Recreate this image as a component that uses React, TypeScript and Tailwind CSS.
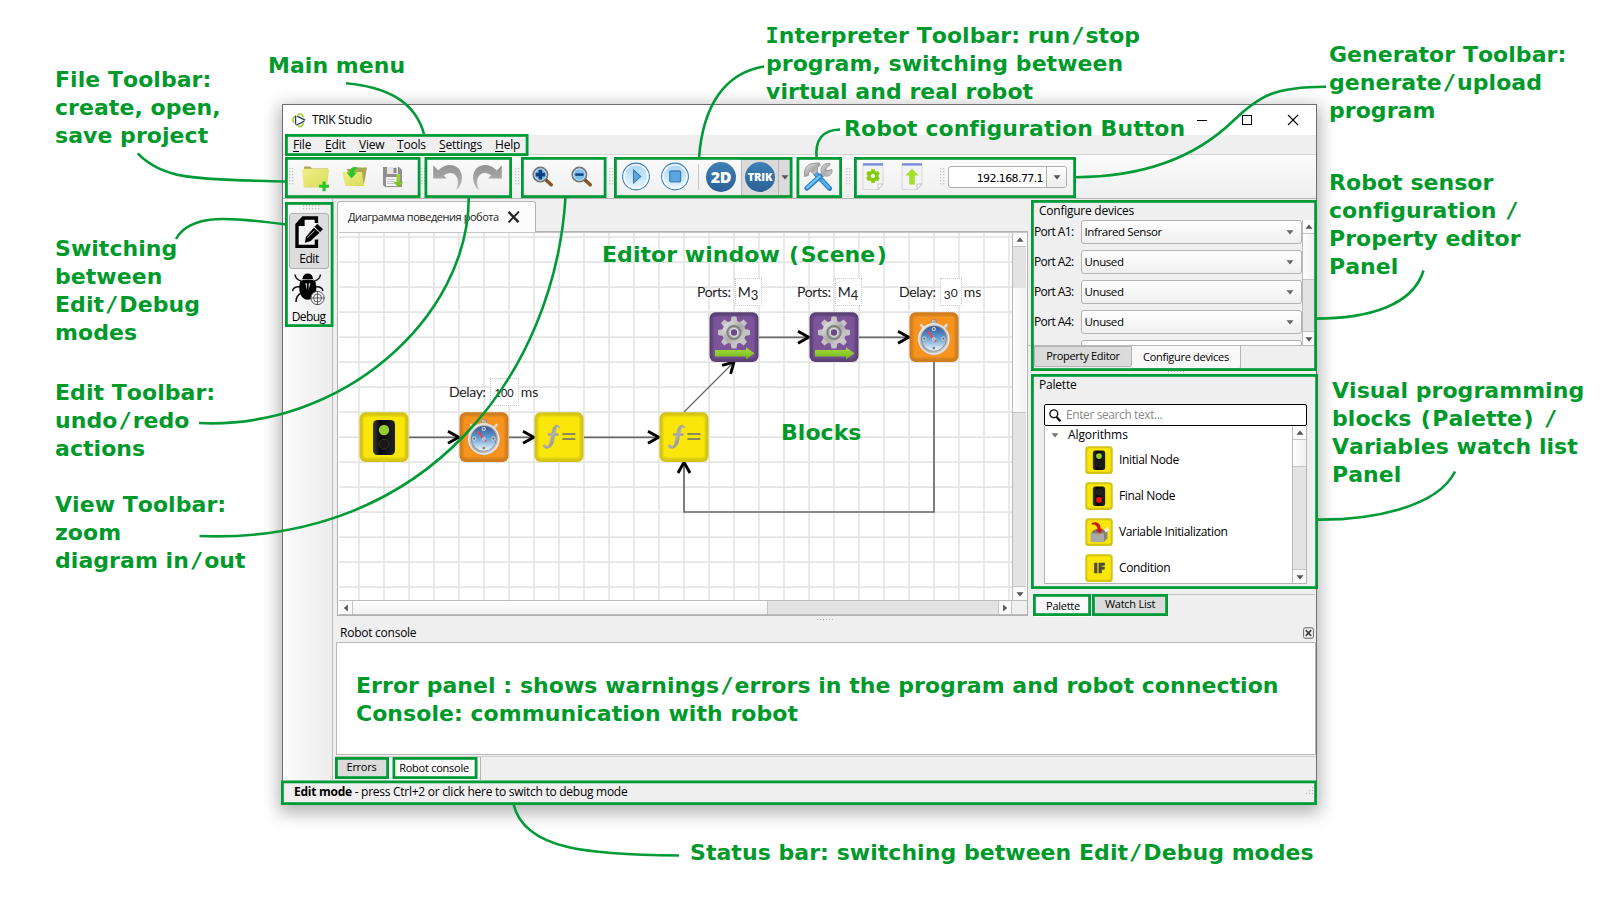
import React from "react";

const UI = "font-['Open_Sans','Noto_Sans',sans-serif]";

/* ---------- small shared pieces ---------- */

function Handle({ className = "" }: { className?: string }) {
  return (
    <svg className={`shrink-0 ${className}`} width="5" height="18" viewBox="0 0 5 18">
      {[0, 3, 6, 9, 12, 15].map((y) => (
        <g key={y} fill="#c4c4c4">
          <rect x="0" y={y} width="1.3" height="1.3" />
          <rect x="3" y={y} width="1.3" height="1.3" />
        </g>
      ))}
    </svg>
  );
}

function Arrow({ dir = "down", color = "#555" }: { dir?: "up" | "down" | "left" | "right"; color?: string }) {
  const d = {
    down: "M0.5 2.2H7.5L4 6.4Z",
    up: "M0.5 5.8H7.5L4 1.6Z",
    left: "M5.9 0.5V7.5L1.8 4Z",
    right: "M2.1 0.5V7.5L6.2 4Z",
  }[dir];
  return (
    <svg width="8" height="8" viewBox="0 0 8 8" className="shrink-0">
      <path d={d} fill={color} />
    </svg>
  );
}

function VScroll({ before, thumb, width }: { before: string; thumb: string; width: string }) {
  return (
    <div className={`flex shrink-0 flex-col border-l border-[#b9b9b9] bg-[#e3e3e3] ${width}`}>
      <div className="flex h-[14px] shrink-0 items-center justify-center border-b border-[#c4c4c4] bg-[#fafafa]">
        <Arrow dir="up" />
      </div>
      <div className={`shrink-0 ${before}`} />
      <div className={`shrink-0 border-b border-[#c4c4c4] bg-gradient-to-r from-[#fcfcfc] to-[#f1f1f1] ${thumb}`} />
      <div className="grow" />
      <div className="flex h-[14px] shrink-0 items-center justify-center border-t border-[#c4c4c4] bg-[#fafafa]">
        <Arrow dir="down" />
      </div>
    </div>
  );
}

/* ---------- gradients used by several drawings ---------- */

function Defs() {
  return (
    <svg width="0" height="0" className="absolute">
      <defs>
        <linearGradient id="steel" x1="0" y1="0" x2="1" y2="1">
          <stop offset="0" stopColor="#f2f2f2" />
          <stop offset="0.5" stopColor="#a9a9a9" />
          <stop offset="1" stopColor="#dcdcdc" />
        </linearGradient>
        <linearGradient id="dial" x1="0" y1="0" x2="0" y2="1">
          <stop offset="0" stopColor="#2f55a0" />
          <stop offset="0.45" stopColor="#5f9ad0" />
          <stop offset="1" stopColor="#f4fbff" />
        </linearGradient>
        <linearGradient id="folder" x1="0" y1="0" x2="1" y2="1">
          <stop offset="0" stopColor="#efef8c" />
          <stop offset="1" stopColor="#dada55" />
        </linearGradient>
        <linearGradient id="green" x1="0" y1="0" x2="0" y2="1">
          <stop offset="0" stopColor="#a5dc3c" />
          <stop offset="1" stopColor="#74b81c" />
        </linearGradient>
        <linearGradient id="ice" x1="0" y1="0" x2="0" y2="1">
          <stop offset="0" stopColor="#a8d4f5" />
          <stop offset="1" stopColor="#e6f8ff" />
        </linearGradient>
        <linearGradient id="grayv" x1="0" y1="0" x2="0" y2="1">
          <stop offset="0" stopColor="#929292" />
          <stop offset="1" stopColor="#b9b9b9" />
        </linearGradient>
        <linearGradient id="fn" x1="0" y1="0" x2="1" y2="1">
          <stop offset="0" stopColor="#6f6f6f" />
          <stop offset="0.5" stopColor="#b0b0b0" />
          <stop offset="1" stopColor="#6f6f6f" />
        </linearGradient>
        <linearGradient id="dark" x1="0" y1="0" x2="1" y2="0">
          <stop offset="0" stopColor="#3a3a3a" />
          <stop offset="0.35" stopColor="#050505" />
          <stop offset="1" stopColor="#222" />
        </linearGradient>
        <filter id="soft" x="-10%" y="-10%" width="120%" height="120%">
          <feGaussianBlur stdDeviation="1.3" />
        </filter>
      </defs>
    </svg>
  );
}

/* ---------- toolbar icons ---------- */

const NewIcon = () => (
  <svg width="28" height="28" viewBox="0 0 28 28" className="mt-[6px] ml-2 shrink-0">
    <path d="M2 3V1.6Q2 .6 3 .6H8L10 2.4H26V6H2Z" fill="#a9a552" />
    <path d="M0 3.6Q0 2.8 .8 2.8H26.2Q27.2 2.8 27 4L25 20.5Q24.8 21.4 24 21.4H2.6Q1.8 21.4 1.7 20.5Z" fill="url(#folder)" />
    <path d="M20.5 15.5h3.2v3.2h3.3v3.1h-3.3v3.4h-3.2v-3.4h-3.5v-3.1h3.5z" fill="#2bc52b" />
  </svg>
);

const OpenIcon = () => (
  <svg width="26" height="22" viewBox="0 0 26 22" className="ml-3 shrink-0">
    <path d="M5 3L14 3 15.5 1.6H25L22 18H8Z" fill="#a9a552" />
    <path d="M0 6H20L22 20H3.5Z" fill="url(#folder)" />
    <path d="M17 2.2C12 -.5 7.5 2 7.6 6.4L4.5 6.4 9.4 12.5 15 6.6 12 6.6C12 3.6 14 2.4 17 2.2Z" fill="#2bc52b" />
  </svg>
);

const SaveIcon = () => (
  <svg width="22" height="22" viewBox="0 0 22 22" className="ml-[14px] shrink-0">
    <path d="M1 1H17L20 4V21H3L1 19Z" fill="#8f8f8f" />
    <rect x="5" y="1" width="11" height="7" fill="#e4e4e4" />
    <rect x="11.5" y="2" width="3" height="5" fill="#8a8a8a" />
    <rect x="4" y="11" width="13" height="9" fill="#f4f4f4" />
    <path d="M5 13.5H13M5 15.5H13M5 17.5H13" stroke="#c9c9c9" strokeWidth="1" />
    <path d="M14.5 8H18V16H21.2L16.3 21.6 11.5 16H14.5Z" fill="url(#green)" />
  </svg>
);

const UndoShape = () => (
  <path d="M.2 2.2 5.2 7.4C14-1.5 26.5 1 28.6 11.5 29.8 18 27.4 23.6 23 27.2 25.6 21 25.6 15.6 22.4 12.2 19.2 8.8 14.4 9.4 10.8 12.6L13.8 15.6H.2Z" fill="url(#grayv)" />
);

function Magnifier({ plus, className }: { plus?: boolean; className: string }) {
  return (
    <svg width="22" height="22" viewBox="0 0 22 22" className={`shrink-0 ${className}`}>
      <path d="M14 14 19.2 18.8" stroke="#8b5527" strokeWidth="3.6" strokeLinecap="round" />
      <path d="M12.5 12.5 14.8 14.6" stroke="#444" strokeWidth="2.6" />
      <circle cx="8.4" cy="8.6" r="7" fill="#7dc0ee" stroke="#777" strokeWidth="2" />
      <circle cx="8.4" cy="8.6" r="5.8" fill="none" stroke="#d5ecfa" strokeWidth="0.9" />
      <path d={plus ? "M3.6 8.6H13.2M8.4 3.8V13.4" : "M4.2 8.6H12.6"} stroke="#0b3f80" strokeWidth={plus ? 3.6 : 2.4} />
    </svg>
  );
}

const PlayIcon = () => (
  <svg width="28" height="29" viewBox="0 0 28 29" className="ml-2 shrink-0">
    <circle cx="14" cy="14.5" r="13.4" fill="url(#ice)" stroke="#4482ba" strokeWidth="1.1" />
    <circle cx="14" cy="14.5" r="11.8" fill="none" stroke="#fff" strokeOpacity="0.8" strokeWidth="1.6" />
    <path d="M11.5 8 18.8 14.6 11.5 21Z" fill="#5ea6de" stroke="#3f7db5" strokeWidth="1.1" />
  </svg>
);

const StopIcon = () => (
  <svg width="28" height="29" viewBox="0 0 28 29" className="ml-[11px] shrink-0">
    <circle cx="14" cy="14.5" r="13.4" fill="url(#ice)" stroke="#4482ba" strokeWidth="1.1" />
    <circle cx="14" cy="14.5" r="11.8" fill="none" stroke="#fff" strokeOpacity="0.8" strokeWidth="1.6" />
    <rect x="8.8" y="9" width="10.8" height="10.8" rx="1" fill="#5ea6de" stroke="#3f7db5" strokeWidth="1.3" />
  </svg>
);

function BlueBadge({ text, size }: { text: string; size: string }) {
  return (
    <div
      className={`flex size-[30px] shrink-0 items-center justify-center rounded-full bg-gradient-to-b from-[#4080b6] to-[#2a6196] font-['Open_Sans',sans-serif] font-extrabold text-white ${size}`}
    >
      {text}
    </div>
  );
}

const ToolsIcon = () => (
  <svg width="29" height="29" viewBox="0 0 29 29" className="ml-[13px] shrink-0">
    <path d="M12 12 25.5 26.4" stroke="#2f7fc4" strokeWidth="5" strokeLinecap="round" />
    <path d="M12 12 25 25.8" stroke="#52b2ee" strokeWidth="2.6" strokeLinecap="round" />
    <path d="M.6 14.5V8.5C2 3.5 6 .8 15 1L16.4 3.2 13.4 5.4 13.8 9.6 10.6 12.6 6.4 9.2 4.6 10.4 4.4 13.4Z" fill="url(#steel)" stroke="#8e8e8e" strokeWidth="0.8" />
    <path d="M26 2.8 22 6.3 22.4 8.8 28 7.6C28.6 12.4 24.6 15.2 20.4 13.8L17.4 16.2 14.4 13 17.4 10.4C15.8 5.8 19 .4 26 1.6Z" fill="url(#steel)" stroke="#8e8e8e" strokeWidth="0.8" />
    <path d="M16 14.4 3 26.2" stroke="#2f7fc4" strokeWidth="5" strokeLinecap="round" />
    <path d="M15.6 14.4 3.2 25.6" stroke="#6cc6f6" strokeWidth="2.4" strokeLinecap="round" />
  </svg>
);

function DocIcon({ kind, className }: { kind: "gear" | "up"; className: string }) {
  return (
    <svg width="22" height="29" viewBox="0 0 22 29" className={`shrink-0 ${className}`}>
      <path d="M1 1.5H21V22L16 27.5H1Z" fill="#f3f3f3" stroke="#d8d8d8" strokeWidth="1" />
      <path d="M21 22H16V27.5Z" fill="#fff" stroke="#b5b5b5" strokeWidth="0.8" />
      <rect x="1" y="1.2" width="20" height="2.4" fill="#7d8ee0" />
      {kind === "gear" ? (
        <g>
          {[0, 60, 120, 180, 240, 300].map((a) => (
            <rect key={a} x="9" y="7" width="4" height="5" rx="1" fill="#8ed31b" transform={`rotate(${a} 11 14)`} />
          ))}
          <circle cx="11" cy="14" r="4" fill="none" stroke="#84ca12" strokeWidth="3" />
        </g>
      ) : (
        <path d="M11 6.5 17.5 13.5H13.8V22.5H8.2V13.5H4.5Z" fill="#a3e02e" />
      )}
    </svg>
  );
}

function Toolbar() {
  return (
    <div className="flex h-[44px] shrink-0 items-center border-b border-[#b4b4b4] bg-gradient-to-b from-[#fbfbfb] to-[#efefef]">
      <Handle className="ml-[6px]" />
      <NewIcon />
      <OpenIcon />
      <SaveIcon />
      <Handle className="ml-[17px]" />
      <svg width="30" height="28" viewBox="0 0 30 28" className="ml-[7px] shrink-0">
        <UndoShape />
      </svg>
      <svg width="30" height="28" viewBox="0 0 30 28" className="ml-[9px] shrink-0">
        <g transform="translate(30 0) scale(-1 1)">
          <UndoShape />
        </g>
      </svg>
      <Handle className="ml-[13px]" />
      <Magnifier plus className="mt-px ml-3" />
      <Magnifier className="mt-px ml-[17px]" />
      <Handle className="ml-4" />
      <PlayIcon />
      <StopIcon />
      <div className="mt-px ml-[9px] h-[26px] w-px shrink-0 bg-[#c8c8c8]" />
      <div className="mt-px ml-[7px] shrink-0">
        <BlueBadge text="2D" size="text-[16px] tracking-[-0.3px]" />
      </div>
      <div className="mt-px ml-[5px] flex h-[37px] w-[38px] shrink-0 items-center justify-center border border-[#b8b8b8] bg-[#dadada]">
        <BlueBadge text="TRIK" size="text-[11px] tracking-[-0.2px]" />
      </div>
      <div className="mt-px flex h-[37px] w-[12px] shrink-0 items-center justify-center border border-l-0 border-[#b8b8b8] bg-[#dadada]">
        <Arrow />
      </div>
      <ToolsIcon />
      <Handle className="ml-[13px]" />
      <DocIcon kind="gear" className="ml-[11px]" />
      <DocIcon kind="up" className="ml-[17px]" />
      <Handle className="ml-[17px]" />
      <div className="mt-px ml-[3px] flex h-[22px] w-[119px] shrink-0 items-center rounded-[3px] border border-[#b0b0b0] bg-white">
        <div className="grow pt-[3px] pr-[3px] text-right font-['DejaVu_Sans',sans-serif] text-[11px] leading-[16px] tracking-[-0.6px] text-black">192.168.77.1</div>
        <div className="flex h-full w-[20px] items-center justify-center rounded-r-[3px] border-l border-[#b0b0b0] bg-gradient-to-b from-white to-[#ececec]">
          <Arrow />
        </div>
      </div>
    </div>
  );
}

/* ---------- left mode bar ---------- */

function ModeBar() {
  return (
    <div className="flex w-[49px] shrink-0 flex-col bg-gradient-to-r from-[#fbfbfb] to-[#ededed] pl-[6px]">
      <svg width="18" height="5" viewBox="0 0 18 5" className="mt-[6px] ml-[14px]">
        {[0, 3, 6, 9, 12, 15].map((x) => (
          <g key={x} fill="#c4c4c4">
            <rect x={x} y="0" width="1.3" height="1.3" />
            <rect x={x} y="3" width="1.3" height="1.3" />
          </g>
        ))}
      </svg>
      <div className="mt-[3px] flex h-[56px] w-[40px] flex-col items-center rounded-[3px] border border-[#b1b1b1] bg-[#dcdcdc] pt-[2px]">
        <svg width="28" height="33" viewBox="0 0 28 33" className="shrink-0">
          <path d="M21.5 12V2.2H9L2.2 9V30.2H21.5V22" fill="#f4f4f4" />
          <path d="M21.4 7V2H8.2L2 8.6V30.4H21.4V23.6" fill="none" stroke="#000" strokeWidth="3.4" />
          <path d="M1 10 9.6 1V10Z" fill="#000" />
          <path d="M22.2 8.2 27.6 13 25.2 15.8 19.8 10.8ZM18.8 12 24.2 16.8 15.6 24.8 10.2 26.4 11.2 21Z" fill="#000" stroke="#000" strokeWidth="0.6" />
          <path d="M12.6 21.6 19.6 14.6" stroke="#fff" strokeWidth="0.8" />
        </svg>
        <span className="mt-[2px] text-[12px] leading-4 tracking-[-0.4px]">Edit</span>
      </div>
      <div className="mt-[4px] flex w-[39px] flex-col items-center">
        <svg width="33" height="33" viewBox="0 0 33 33" className="shrink-0">
          <g stroke="#111" strokeWidth="1.5" fill="none">
            <path d="M3 1.5C3.5 5.5 5.5 7 9 8" />
            <path d="M28.5 1.5C28 5.5 26 7 22.5 8" />
            <path d="M.5 18C1.5 14 4 13.2 8.5 14" />
            <path d="M31 18C30 14 27.5 13.2 23 14" />
            <path d="M4 29C4 24 6 21.5 9.5 20" />
          </g>
          <path d="M10.5 5.5C11 2 13 .6 15.8 .6S20.6 2 21 5.5L22 6.2H9.6Z" fill="#000" />
          <path d="M8.5 8C10 6.3 21.6 6.3 23 8 26 15 24 26.5 15.8 26.8 7.6 26.5 5.6 15 8.5 8Z" fill="#000" />
          <path d="M13.2 10.2H18.4L15.8 20Z" fill="#ddd" />
          <path d="M14.9 9.5H16.7V26H14.9Z" fill="#000" />
          <circle cx="25.5" cy="25" r="6.6" fill="#f5f5f5" stroke="#555" strokeWidth="1" />
          <circle cx="25.5" cy="25" r="4" fill="none" stroke="#555" strokeWidth="0.9" />
          <path d="M25.5 18V32M18.5 25H32.5" stroke="#555" strokeWidth="0.9" />
        </svg>
        <span className="mt-[3px] text-[12px] leading-4 tracking-[-0.6px]">Debug</span>
      </div>
    </div>
  );
}

/* ---------- diagram nodes ---------- */

function Tile({ fill, edge }: { fill: string; edge: string }) {
  return (
    <g>
      <rect x="0.5" y="0.3" width="49" height="49.7" rx="6" fill={edge} />
      <rect x="4" y="4" width="42" height="42" rx="3" fill={fill} filter="url(#soft)" />
      <rect x="5.5" y="5.5" width="39" height="39" rx="3" fill={fill} />
    </g>
  );
}

const YellowTile = () => <Tile fill="#fae709" edge="#d3c415" />;

function LightNode({ red }: { red?: boolean }) {
  return (
    <g>
      <YellowTile />
      <rect x="14" y="8" width="22" height="35" rx="4.5" fill="url(#dark)" />
      <circle cx="25" cy="18" r="5.2" fill={red ? "#1f1f1f" : "#93cc2e"} stroke={red ? "#333" : "none"} />
      <circle cx="25" cy="32" r="5" fill={red ? "#f40f0f" : "#171717"} stroke={red ? "none" : "#333"} />
    </g>
  );
}

function ClockNode() {
  return (
    <g>
      <Tile fill="#f7931e" edge="#cf7d1f" />
      <rect x="22.6" y="7.5" width="4.8" height="5" rx="1.5" fill="url(#steel)" stroke="#777" strokeWidth="0.5" />
      <path d="M12.2 13 15.6 17M37.4 13 34 17" stroke="#ddd" strokeWidth="2.6" strokeLinecap="round" />
      <circle cx="24.8" cy="27" r="16" fill="url(#steel)" />
      <circle cx="24.8" cy="27" r="15" fill="none" stroke="#e6e6e6" strokeWidth="1.4" />
      <circle cx="24.8" cy="26.6" r="12.6" fill="url(#dial)" stroke="#777" strokeWidth="0.7" />
      {[
        [24.8, 17],
        [24.8, 36],
        [15.2, 26.6],
        [34.4, 26.6],
      ].map(([x, y]) => (
        <circle key={`${x}-${y}`} cx={x} cy={y} r="1.7" fill="#678" stroke="#e0e0e0" strokeWidth="0.9" />
      ))}
      <path d="M18.6 19.4 27 29.6" stroke="#e8464f" strokeWidth="2" />
      <circle cx="24.8" cy="27" r="1.5" fill="#9fb4c4" stroke="#eee" strokeWidth="0.6" />
    </g>
  );
}

function MotorNode() {
  return (
    <g>
      <Tile fill="#7c549a" edge="#5d4276" />
      <g fill="url(#steel)">
        {[0, 45, 90, 135, 180, 225, 270, 315].map((a) => (
          <path key={a} d="M22.6 4.5H27.4L28.4 10H21.6Z" fill="#c4c4c4" transform={`rotate(${a} 25 20.5)`} />
        ))}
        <circle cx="25" cy="20.5" r="11.8" />
      </g>
      <circle cx="25" cy="20.5" r="6.6" fill="none" stroke="#7f7f7f" strokeWidth="2" />
      <circle cx="25" cy="20.5" r="3.8" fill="#6b4a87" stroke="#e4e4e4" strokeWidth="1.2" />
      <path d="M6 38H37V35.3L45.5 41.2 37 47.2V44.4H6Z" fill="url(#green)" />
    </g>
  );
}

function FunctionNode() {
  return (
    <g>
      <YellowTile />
      <path
        d="M26 15.4C24.4 11.6 19.6 12.6 18.4 18.4L17.8 21.6H14.4V23.4H17.4L15.6 31C15 34 13.2 35.6 12 33.6 11 31.6 8.4 33 9.4 35 11.4 37.6 17.6 36.6 19.2 30.6L20.8 23.4H24.2V21.6H21.2L22 17.6C22.6 14.4 24 13.6 24 15.6Z"
        fill="url(#fn)"
        stroke="url(#fn)"
        strokeWidth="0.7"
      />
      <path d="M28.4 22H41.4M28.4 27H41.4" stroke="#8b8a55" strokeWidth="2.2" />
    </g>
  );
}

function VarNode() {
  return (
    <g>
      <YellowTile />
      <path d="M10 28 16 21H40L36 28Z" fill="#777" />
      <path d="M10 28H34V43H10Z" fill="#a9a9a9" />
      <path d="M34 28 40 21V36L34 43Z" fill="#838383" />
      <path d="M34 21 41 16 43 22 37 26Z" fill="#f2f2f2" />
      <path d="M12 9C20 5 28 9 28 19H32L26.5 28 18.5 20.5 22.5 20C22 14 18 11 12 12Z" fill="#d01616" />
    </g>
  );
}

const HEAD = "M-11.5 -6 -0.8 0 -11.5 6";

function Scene() {
  return (
    <div className="relative h-[367px] w-[673px] shrink-0 overflow-hidden bg-white">
      <svg width="673" height="367" viewBox="339 233 673 367" className="block">
        <g stroke="#e5e5e5" strokeWidth="1.7">
          {Array.from({ length: 27 }, (_, i) => (
            <path key={i} d={`M${359 + i * 25} 232V600`} />
          ))}
          {Array.from({ length: 15 }, (_, i) => (
            <path key={i} d={`M339 ${237.2 + i * 25}H1012`} />
          ))}
        </g>
        <g stroke="#6a6a6a" strokeWidth="1.7" fill="none">
          <path d="M409 437.3H459M509 437.3H534M584 437.3H659M759 337.3H809M859 337.3H909" />
          <path d="M934 362V512H684V462" />
          <path d="M684 412 734 362" strokeWidth="1.2" />
        </g>
        <g stroke="#000" strokeWidth="2.9" fill="none">
          {[
            [459.5, 437.3, 0],
            [534.5, 437.3, 0],
            [659.5, 437.3, 0],
            [809.5, 337.3, 0],
            [909.5, 337.3, 0],
            [684, 461.5, -90],
            [734.5, 361.5, -45],
          ].map(([x, y, a]) => (
            <path key={`${x}-${y}`} d={HEAD} transform={`translate(${x} ${y}) rotate(${a})`} />
          ))}
        </g>
        <g transform="translate(359 412)"><LightNode /></g>
        <g transform="translate(459 412)"><ClockNode /></g>
        <g transform="translate(534 412)"><FunctionNode /></g>
        <g transform="translate(659 412)"><FunctionNode /></g>
        <g transform="translate(709 312)"><MotorNode /></g>
        <g transform="translate(809 312)"><MotorNode /></g>
        <g transform="translate(909 312)"><ClockNode /></g>
      </svg>
      <NodeLabel pos="left-[358px] top-[45px]" name="Ports:" box="ml-[4px] w-[27px]" value={<>M<span className="relative top-[3px] text-[13px]">3</span></>} />
      <NodeLabel pos="left-[458px] top-[45px]" name="Ports:" box="ml-[4px] w-[27px]" value={<>M<span className="relative top-[3px] text-[13px]">4</span></>} />
      <NodeLabel pos="left-[560px] top-[45px]" name="Delay:" box="ml-[4px] w-[22px]" value={<><span className="relative top-[2px] text-[12px]">3</span><span className="text-[12px]">0</span></>} unit="ms" />
      <NodeLabel pos="left-[110px] top-[145px]" name="Delay:" box="ml-[4px] w-[29px]" value={<span className="text-[11px]">100</span>} unit="ms" />
    </div>
  );
}

function NodeLabel({ pos, name, box, value, unit }: { pos: string; name: string; box: string; value: React.ReactNode; unit?: string }) {
  return (
    <div className={`absolute flex items-center font-['Lato',sans-serif] text-[14px] leading-none text-[#222] ${pos}`}>
      <span className="tracking-[-0.35px]">{name}</span>
      <span className={`flex h-[28px] items-baseline justify-center border border-dotted border-[#c9c9c9] bg-white pt-[6px] ${box}`}>
        <span>{value}</span>
      </span>
      {unit && <span className="ml-[2px]">{unit}</span>}
    </div>
  );
}

function Editor() {
  return (
    <div className="flex w-[695px] shrink-0 flex-col pl-[4px]">
      <div className="flex h-[33px] shrink-0 items-end">
        <div className="flex h-[31px] w-[199px] items-center rounded-t-[3px] border border-b-0 border-[#b4b4b4] bg-[#fcfcfc] pl-[10px]">
          <span className="w-[152px] text-[11px] tracking-[-0.45px] whitespace-nowrap text-[#222]">Диаграмма поведения робота</span>
          <svg width="13" height="12" viewBox="0 0 13 12" className="ml-[7px]">
            <path d="M1.5 .8 11.5 11.2" stroke="#222" strokeWidth="2.4" />
            <path d="M12 .6 1.5 11.4" stroke="#222" strokeWidth="1.8" />
          </svg>
        </div>
        <div className="h-px grow bg-[#b4b4b4]" />
      </div>
      <div className="flex h-[384px] flex-col border-r border-b border-l border-[#b0b0b0] bg-white pl-[1px]">
        <div className="h-[1px] shrink-0 bg-[#c4c4c4]" />
        <div className="flex grow">
          <Scene />
          <VScroll before="h-[41px]" thumb="h-[125px]" width="w-[14px]" />
        </div>
        <div className="flex h-[15px] shrink-0 border-t border-b border-[#bcbcbc]">
          <div className="flex w-[14px] items-center justify-center border-r border-[#c4c4c4] bg-[#fafafa]">
            <Arrow dir="left" />
          </div>
          <div className="w-[415px] border-r border-[#c4c4c4] bg-gradient-to-b from-white to-[#f1f1f1]" />
          <div className="w-[230px] bg-[#e3e3e3]" />
          <div className="flex w-[14px] items-center justify-center border-x border-[#c4c4c4] bg-[#fafafa]">
            <Arrow dir="right" />
          </div>
          <div className="grow bg-[#efefef]" />
        </div>
      </div>
    </div>
  );
}

/* ---------- right panels ---------- */

function PortRow({ port, value }: { port: string; value: string }) {
  return (
    <div className="flex h-[24px] shrink-0 items-center">
      <span className="w-[46.5px] text-[12px] tracking-[-0.6px] whitespace-nowrap">{port}</span>
      <div className="flex h-[24px] w-[221px] items-center justify-between rounded-[3px] border border-[#b3b3b3] bg-gradient-to-b from-white to-[#efefef] pr-[7px] pl-[3px] text-[11.5px] tracking-[-0.4px]">
        <span>{value}</span>
        <Arrow color="#666" />
      </div>
    </div>
  );
}

function DevicesPanel() {
  return (
    <div className="flex h-[172px] shrink-0 flex-col">
      <div className="flex h-[21px] shrink-0 items-center pt-[2px] pl-[12px] text-[12px] tracking-[-0.25px]">
        <span>Configure devices</span>
      </div>
      <div className="flex h-[125px] shrink-0 pl-[7px]">
        <div className="flex w-[268px] shrink-0 flex-col gap-[6px] overflow-hidden">
          <PortRow port="Port A1:" value="Infrared Sensor" />
          <PortRow port="Port A2:" value="Unused" />
          <PortRow port="Port A3:" value="Unused" />
          <PortRow port="Port A4:" value="Unused" />
          <PortRow port="" value="" />
        </div>
        <VScroll before="h-0" thumb="h-[46px]" width="w-[13px]" />
      </div>
      <div className="flex h-[23px] shrink-0 items-start border-t border-[#b9b9b9] pl-[7px] text-[11px] tracking-[-0.3px]">
        <div className="flex h-[21px] w-[98px] items-center justify-center rounded-b-[2px] border border-[#b4b4b4] bg-[#dbdbdb]">Property Editor</div>
        <div className="flex h-[23px] w-[109px] items-center justify-center rounded-b-[2px] border border-t-0 border-l-0 border-[#b4b4b4] bg-[#f8f8f8]">Configure devices</div>
      </div>
    </div>
  );
}

function PaletteRow({ icon, label }: { icon: React.ReactNode; label: string }) {
  return (
    <div className="flex h-[36px] shrink-0 items-center gap-[6px] pl-[40px] text-[12px] tracking-[-0.35px]">
      <svg width="28" height="28" viewBox="0 0 50 50">{icon}</svg>
      <span>{label}</span>
    </div>
  );
}

function PalettePanel() {
  return (
    <div className="flex h-[222px] shrink-0 flex-col">
      <div className="flex h-[26px] shrink-0 items-center pl-[12px] text-[12px] tracking-[-0.2px]">
        <span>Palette</span>
      </div>
      <div className="ml-[17px] flex w-[263px] flex-col pt-[6px]">
        <div className="flex h-[22px] items-center rounded-[2px] border-[1.5px] border-black bg-white pl-[4px]">
          <svg width="12" height="13" viewBox="0 0 12 13">
            <circle cx="4.8" cy="4.8" r="3.9" fill="none" stroke="#111" strokeWidth="1.4" />
            <path d="M7.6 8 11.4 12.2" stroke="#111" strokeWidth="2.2" />
          </svg>
          <span className="pl-[5px] text-[12px] tracking-[-0.4px] text-[#8a8a8a]">Enter search text...</span>
        </div>
        <div className="flex h-[158px] border border-t-0 border-[#b5b5b5] bg-white">
          <div className="flex grow flex-col overflow-hidden">
            <div className="flex h-[16px] shrink-0 items-center pt-px pl-[6px] text-[12px] tracking-[-0.1px]">
              <Arrow color="#777" />
              <span className="pl-[9px]">Algorithms</span>
            </div>
            <PaletteRow icon={<LightNode />} label="Initial Node" />
            <PaletteRow icon={<LightNode red />} label="Final Node" />
            <PaletteRow icon={<VarNode />} label="Variable Initialization" />
            <PaletteRow
              icon={
                <>
                  <YellowTile />
                  <text x="25" y="33.5" textAnchor="middle" fontFamily="Open Sans" fontWeight="800" fontSize="24" fill="#4d4a3a" stroke="#4d4a3a" strokeWidth="1">IF</text>
                </>
              }
              label="Condition"
            />
          </div>
          <VScroll before="h-0" thumb="h-[27px]" width="w-[14px]" />
        </div>
      </div>
    </div>
  );
}

function RightColumn() {
  return (
    <div className="-ml-px flex grow flex-col">
      <DevicesPanel />
      <div className="flex h-px shrink-0 justify-center gap-[2px] pl-[8px]">
        {[0, 1, 2, 3, 4, 5].map((i) => (
          <div key={i} className="size-px bg-[#b5b5b5]" />
        ))}
      </div>
      <PalettePanel />
      <div className="mr-px ml-[7px] flex h-[24px] shrink-0 items-start border-t border-[#c4c4c4] text-[11px] tracking-[-0.25px]">
        <div className="flex h-[22px] w-[58px] items-center justify-center bg-[#fafafa]">Palette</div>
        <div className="flex h-[21px] w-[76px] items-center justify-center bg-[#dbdbdb] pb-[2px]">Watch List</div>
      </div>
    </div>
  );
}

/* ---------- console ---------- */

function ConsolePanel() {
  return (
    <div className="flex grow flex-col">
      <div className="flex h-[25px] shrink-0 flex-col">
        <div className="flex h-[7px] shrink-0 items-start justify-center gap-[2px] pt-[2px]">
          {[0, 1, 2, 3, 4, 5].map((i) => (
            <div key={i} className="size-px bg-[#b0b0b0]" />
          ))}
        </div>
        <div className="flex h-[17px] items-center justify-between pr-[2px] pl-[7px] text-[12px] tracking-[-0.25px]">
          <span>Robot console</span>
          <svg width="11" height="12" viewBox="0 0 11 12">
            <rect x="0.6" y="0.8" width="9.8" height="10.4" rx="1.5" fill="#f2f2f2" stroke="#666" strokeWidth="1" />
            <path d="M2.8 3.2 8.2 8.8M8.2 3.2 2.8 8.8" stroke="#444" strokeWidth="1.7" />
          </svg>
        </div>
      </div>
      <div className="ml-[3px] h-[113px] shrink-0 border border-[#b9b9b9] bg-white" />
      <div className="mt-[1px] ml-[2px] flex grow items-start border-t border-[#cfcfcf] text-[11px] tracking-[-0.25px]">
        <div className="flex h-[21px] w-[53px] items-center justify-center bg-[#dbdbdb]">Errors</div>
        <div className="flex h-[23px] w-[93px] items-center justify-center border-r border-[#b4b4b4] bg-[#fafafa]">Robot console</div>
      </div>
    </div>
  );
}

/* ---------- window ---------- */

const MENU = [
  ["File", "w-[32px]"],
  ["Edit", "w-[34px]"],
  ["View", "w-[38px]"],
  ["Tools", "w-[42px]"],
  ["Settings", "w-[56px]"],
  ["Help", "w-[30px]"],
];

function AppWindow() {
  return (
    <div className={`flex h-[701px] w-[1035px] flex-col border border-[#6f6f6f] bg-[#efefef] text-black shadow-[0_5px_16px_3px_rgba(0,0,0,0.3)] ${UI}`}>
      <div className="flex h-[30px] shrink-0 items-center bg-white pl-[9px]">
        <svg width="15" height="15" viewBox="0 0 15 15">
          <path d="M3.6 2.4V12.6L13.6 7.4Z" fill="none" stroke="#27365c" strokeWidth="1.3" strokeLinejoin="round" strokeDasharray="9 2" />
          <path d="M1.8 9.6C.2 7.4 .8 4.6 3 3.4M6 1.6C8.6 .4 10.6 1.6 11.4 4.2M11.6 10C10.6 13 8.4 14.2 6 13.2" fill="none" stroke="#a7cf2f" strokeWidth="1.8" />
        </svg>
        <span className="pl-[5px] text-[12px] tracking-[-0.35px]">TRIK Studio</span>
        <svg width="120" height="12" viewBox="0 0 120 12" className="mr-[17px] ml-auto">
          <path d="M18 6.5H28" stroke="#000" strokeWidth="1" />
          <rect x="63.5" y="1.5" width="9" height="9" fill="none" stroke="#000" />
          <path d="M109 1 119 11M119 1 109 11" stroke="#000" strokeWidth="1.1" />
        </svg>
      </div>
      <div className="flex h-[20px] shrink-0 items-center border-b border-[#d4d4d4] pt-px pl-[10px] text-[12px]">
        {MENU.map(([m, w]) => (
          <span key={m} className={`shrink-0 tracking-[-0.2px] ${w}`}>
            <span className="underline underline-offset-2">{m[0]}</span>
            {m.slice(1)}
          </span>
        ))}
      </div>
      <Toolbar />
      <div className="flex grow">
        <ModeBar />
        <div className="flex grow flex-col border-l border-[#bcbcbc]">
          <div className="flex h-[418px] shrink-0">
            <Editor />
            <RightColumn />
          </div>
          <ConsolePanel />
        </div>
      </div>
      <div className="flex h-[24px] shrink-0 items-center justify-between pl-[11px] text-[12px] tracking-[-0.27px]">
        <span className="whitespace-pre">
          <b>Edit mode</b> - press Ctrl+2 or click here to switch to debug mode
        </span>
        <svg width="12" height="12" viewBox="0 0 12 12" fill="#b5b5b5">
          <path d="M8 1h1v1h-1zM8 4h1v1h-1zM5 4h1v1h-1zM8 7h1v1h-1zM5 7h1v1h-1zM2 7h1v1h-1z" />
        </svg>
      </div>
    </div>
  );
}

/* ---------- annotations drawn over the window ---------- */

const FRAMES: [number, number, number, number][] = [
  [285, 134, 528.5, 156],
  [285, 157, 420.5, 198],
  [424.5, 157, 512, 198],
  [521, 157, 606.5, 198],
  [614, 157, 792.5, 198],
  [796.5, 157, 842, 198],
  [854, 157, 1076, 198],
  [285, 202, 333.5, 327],
  [1031, 200, 1317, 371],
  [1031, 374, 1318, 589],
  [1033, 594, 1091, 616],
  [1092, 594, 1168, 616],
  [335, 757, 389, 779],
  [392.5, 757, 477.5, 779],
  [281, 780.5, 1317, 805],
];

const LINKS = [
  "M137.7 153.3C165 182 205 179 285 181.5",
  "M346 83.3C385 87 415 100 424.3 135",
  "M176 239C190 213 230 217 286 224.5",
  "M468.8 197C468.5 320 340 430 199 423",
  "M565.5 197C555 370 430 545 199.5 536",
  "M764 66.5C725 73 703 105 699 158",
  "M840 129.5C822 130 815 140 816.6 158",
  "M1075 177.2C1150 177 1200 153 1233 121C1260 95 1275 87 1326 86.8",
  "M1315 318.6C1370 318.6 1413 305 1423.5 270.5",
  "M1317 519.6C1370 520 1437 508 1455 471.5",
  "M513.5 804C524 850 590 855 679 855.5",
];

const NOTES: { pos: string; lines: string[] }[] = [
  { pos: "left-[55px] top-[66px]", lines: ["File Toolbar:", "create, open,", "save project"] },
  { pos: "left-[268px] top-[52px]", lines: ["Main menu"] },
  { pos: "left-[766px] top-[22px]", lines: ["Interpreter Toolbar: run/stop", "program, switching between", "virtual and real robot"] },
  { pos: "left-[844px] top-[115px]", lines: ["Robot configuration Button"] },
  { pos: "left-[1329px] top-[41px]", lines: ["Generator Toolbar:", "generate/upload", "program"] },
  { pos: "left-[1329px] top-[169px]", lines: ["Robot sensor", "configuration /", "Property editor", "Panel"] },
  { pos: "left-[1332px] top-[377px]", lines: ["Visual programming", "blocks (Palette) /", "Variables watch list", "Panel"] },
  { pos: "left-[55px] top-[235px]", lines: ["Switching", "between", "Edit/Debug", "modes"] },
  { pos: "left-[55px] top-[379px]", lines: ["Edit Toolbar:", "undo/redo", "actions"] },
  { pos: "left-[55px] top-[491px]", lines: ["View Toolbar:", "zoom", "diagram in/out"] },
  { pos: "left-[602px] top-[241px]", lines: ["Editor window (Scene)"] },
  { pos: "left-[781px] top-[419px]", lines: ["Blocks"] },
  {
    pos: "left-[356px] top-[672px]",
    lines: ["Error panel : shows warnings/errors in the program and robot connection", "Console: communication with robot"],
  },
  { pos: "left-[690px] top-[839px]", lines: ["Status bar: switching between Edit/Debug modes"] },
];

/* Slash and capital I take the wider mono glyphs. */
function NoteLine({ text }: { text: string }) {
  return (
    <div className="flex h-[28px] items-baseline">
      {text
        .split(/([/()I])/)
        .filter(Boolean)
        .map((part, i) => {
          if (part === "/") return <span key={i} className="px-px font-['DejaVu_Sans_Mono',monospace]">/</span>;
          if (part === "(" || part === ")") return <span key={i} className="px-[1.5px]">{part}</span>;
          if (part === "I") return <span key={i} className="-ml-[0.6px] font-['DejaVu_Sans_Mono',monospace]">I</span>;
          return <span key={i}>{part}</span>;
        })}
    </div>
  );
}

export default function App() {
  return (
    <div className="relative h-[912px] w-[1600px] overflow-hidden bg-white pt-[104px] pl-[282px]">
      <Defs />
      <AppWindow />
      <svg className="absolute top-0 left-0" width="1600" height="912" viewBox="0 0 1600 912" fill="none" stroke="#009a36" strokeWidth="2.8">
        {FRAMES.map(([x1, y1, x2, y2]) => (
          <rect key={`${x1}-${y1}`} x={x1 + 1.4} y={y1 + 1.4} width={x2 - x1 - 2.8} height={y2 - y1 - 2.8} />
        ))}
        {LINKS.map((d) => (
          <path key={d} d={d} strokeWidth="2.6" />
        ))}
      </svg>
      {NOTES.map((n) => (
        <div
          key={n.lines.join(" ")}
          className={`absolute font-['Verdana','DejaVu_Sans',sans-serif] text-[22px] leading-[28px] font-bold tracking-[0.05px] whitespace-pre text-[#009a2b] [font-kerning:none] ${n.pos}`}
        >
          {n.lines.map((line) => (
            <NoteLine key={line} text={line} />
          ))}
        </div>
      ))}
    </div>
  );
}
